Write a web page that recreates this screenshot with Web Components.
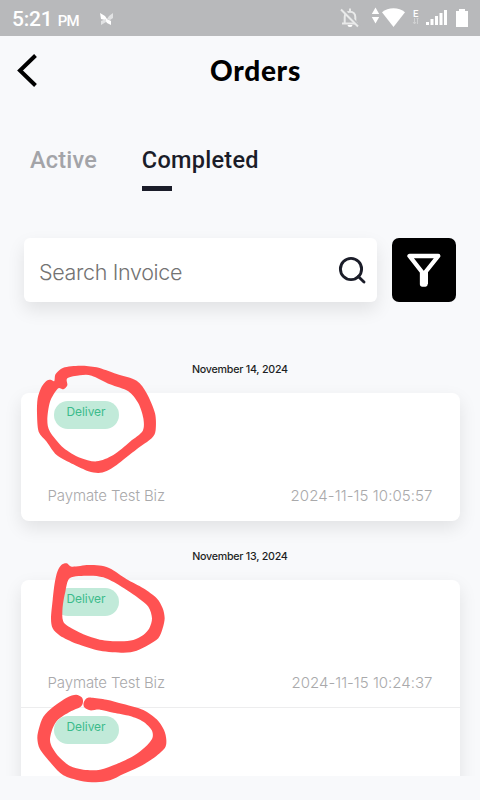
<!DOCTYPE html>
<html lang="en">
<head>
<meta charset="utf-8">
<title>Orders</title>
<style>
body{margin:0;background:#f8f9fb;font-family:Inter,"Liberation Sans",sans-serif}
</style>
</head>
<body>
<orders-screen></orders-screen>
<script>
const make = (name, html, init) => customElements.define(name, class extends HTMLElement {
  connectedCallback() {
    if (!this.shadowRoot) {
      this.attachShadow({mode: 'open'}).innerHTML = html;
      if (init) init.call(this, this.shadowRoot);
    }
  }
});

/* A text run tracked so that its line has the width given in pixels. */
make('fit-text', `<style>:host{display:block;white-space:nowrap}span{display:inline-block}</style><span></span>`, function (root) {
  const s = root.querySelector('span'), t = this.getAttribute('text');
  s.textContent = t;
  const gap = (Number(this.getAttribute('width')) - s.getBoundingClientRect().width) / t.length;
  s.style.letterSpacing = gap.toFixed(3) + 'px';
  s.style.marginRight = (-gap).toFixed(3) + 'px';
});

make('status-bar', `<style>
:host{display:flex;height:36px;background:#b8b9bb;color:#fff;font-family:Roboto,sans-serif;box-sizing:border-box;padding-left:12px}
.time{font-size:21px;line-height:38px;font-weight:500}.pm{font-size:15px;line-height:42px;margin-left:5px;font-weight:500}
.note{margin:12px 0 0 20px;width:14px;height:14px}.right{margin-left:auto;width:144px;height:36px}
</style><fit-text class="time" text="5:21" width="40.5"></fit-text><fit-text class="pm" text="PM" width="21"></fit-text>
<svg class="note" viewBox="0 0 14 14"><path d="M0 1l5 3 2 3 4 2v4l-4-2-2-3-4-1z" fill="#fff"/><path d="M13 1L9 4 7 7l3 1 3-2zM1 13l5-3V7L1 9z" fill="#e1e2e3"/></svg>
<svg class="right" viewBox="336 0 144 36">
<g fill="none" stroke="#e9eaea" stroke-width="2"><path d="M342 23.5h16M344.700 23v-6c0-3 2-5.300 5.300-5.300s5.300 2.300 5.300 5.300v6M350 12V8.500"/><path d="M342.500 8.500l17 17.500" stroke="#b8b9bb" stroke-width="2"/><path d="M341 9.500l17 17" stroke-width="1.900"/></g><path d="M347.500 25h5a2.500 2 0 0 1-5 0z" fill="#fff"/>
<path d="M375.500 7.500l3.700 6.500h-7.400zM375.500 23.500l3.700-6.500h-7.400z" fill="#fff"/>
<path d="M382 12.300C388 6.800 399 6.800 405 12.300L393.500 27z" fill="#fff"/>
<text x="413" y="17" font-size="9.500" fill="#fff" font-family="Roboto" font-weight="500">E</text>
<path d="M414.500 18v6m-1.500-2l1.500 2 1.500-2M417.500 24v-6m-1 1l1-1 1 1" stroke="#d0d1d2" fill="none"/>
<path d="M426 22h3v3h-3zM430.500 19h3v6h-3zM435 16h3v9h-3zM439.500 13h3v12h-3zM444 10h3v15h-3z" fill="#fff"/>
<path d="M459 9h6v2h3v16h-12V11h3z" fill="#fff"/></svg>`);

make('page-header', `<style>
:host{display:grid;grid-template-columns:210px auto 1fr;height:94px;color:#000;font-family:Lato,sans-serif}
svg{width:28px;height:36px;margin:17px 0 0 13px}
fit-text{font-size:28px;font-weight:900;line-height:34px;margin-top:17px}
</style><svg viewBox="0 0 28 36"><path d="M22.500 2.500L7 17.500 22.500 32.500" fill="none" stroke="#000" stroke-width="4"/></svg><fit-text text="Orders" width="91"></fit-text>`);

make('order-tabs', `<style>
:host{display:flex;gap:45px;height:108px;padding-left:30px;font:500 23.500px/30px Roboto,sans-serif;color:#a3a4a8;box-sizing:border-box;padding-top:15px}
.on{color:#1b1d29}i{display:block;width:30px;height:4.500px;background:#1b1d29;margin-top:11px}
</style><fit-text text="Active" width="67"></fit-text><div class="on"><fit-text text="Completed" width="117"></fit-text><i></i></div>`);

make('search-row', `<style>
:host{display:flex;gap:15px;height:64px;padding:0 24px}
.box{width:353px;box-sizing:border-box;display:flex;align-items:center;justify-content:space-between;border-radius:6px;background:#fff;box-shadow:0 8px 18px rgba(0,0,0,.095);padding:0 9px 0 15px;color:#737373;font:300 21.500px/30px Inter,sans-serif}
fit-text{margin-top:4px}.box svg{width:32px;height:32px}.filter{width:64px;height:64px;border-radius:7px;background:#000}
</style><div class="box"><fit-text text="Search Invoice" width="143"></fit-text><svg viewBox="0 0 32 32"><g fill="none" stroke="#1b1d29" stroke-width="2.900"><circle cx="15" cy="15" r="10.600"/><path d="M22.300 22.500l5.700 5.500" stroke-linecap="round"/></g></svg></div>
<svg class="filter" viewBox="0 0 64 64"><path d="M17.500 18h28.800L33.500 34v12.500h-3.500V34z" fill="none" stroke="#fff" stroke-width="4.300" stroke-linejoin="round"/><path d="M28 34h8v12H28z" fill="#fff"/></svg>`);

make('order-item', `<style>
:host{display:flex;flex-direction:column;justify-content:space-between;height:128px;box-sizing:border-box;padding:7.500px 27px 14px;color:#a9a9ab}
:host([divided]){border-top:1px solid #ededee}
.pill{margin-left:6px;width:65px;height:28px;border-radius:14px;background:#c1ead9;color:#3cbb8b;display:flex;justify-content:center;font:400 12px/22px Inter,sans-serif}
.row{display:flex;justify-content:space-between;font:300 15px/22px Inter,sans-serif}
</style><div class="pill"><fit-text text="Deliver" width="39"></fit-text></div><div class="row"><slot name="who"></slot><slot name="when"></slot></div>`);

make('order-card', `<style>
:host{display:block;margin:0 20.500px;width:439px;border-radius:8px;background:#fff;box-shadow:0 7px 18px rgba(0,0,0,.095)}
</style><slot></slot>`);

/* A freehand closed outline, smoothed through its points; the second loop is a hole. */
make('pen-ring', `<style>:host{position:absolute;left:20px;pointer-events:none}svg{display:block;overflow:visible}</style>
<svg width="150" height="130" viewBox="0 0 450 390"><path fill="#ff5252" fill-rule="evenodd"/></svg>`, function (root) {
  const loop = str => {
    const p = str.trim().split(/\s+/).map(v => v.split(',').map(Number)), n = p.length;
    let d = 'M' + p[0];
    for (let i = 0; i < n; i++) {
      const a = p[(i + n - 1) % n], b = p[i], c = p[(i + 1) % n], e = p[(i + 2) % n];
      d += `C${b[0] + (c[0] - a[0]) / 7},${b[1] + (c[1] - a[1]) / 7} ${c[0] - (e[0] - b[0]) / 7},${c[1] - (e[1] - b[1]) / 7} ${c}`;
    }
    return d + 'Z';
  };
  root.querySelector('path').setAttribute('d', this.getAttribute('points').split('|').map(loop).join(''));
});

make('orders-screen', `<style>
:host{display:block;position:relative;width:480px;height:800px;overflow:hidden;background:#f8f9fb}
.list{height:474px;overflow:hidden}
.date{display:flex;justify-content:center;font:500 10.700px/18px Inter,sans-serif;color:#1d1f24}
.d1{padding:59px 0 14px}.d2{padding:27px 0 14px}
</style>
<status-bar></status-bar><page-header></page-header><order-tabs></order-tabs><search-row></search-row>
<div class="list">
<div class="date d1"><fit-text text="November 14, 2024" width="96"></fit-text></div>
<order-card><order-item><fit-text slot="who" text="Paymate Test Biz" width="117.5"></fit-text><fit-text slot="when" text="2024-11-15 10:05:57" width="142"></fit-text></order-item></order-card>
<div class="date d2"><fit-text text="November 13, 2024" width="95.5"></fit-text></div>
<order-card><order-item style="height:127px;padding-bottom:13px"><fit-text slot="who" text="Paymate Test Biz" width="117.5"></fit-text><fit-text slot="when" text="2024-11-15 10:24:37" width="141"></fit-text></order-item><order-item divided></order-item></order-card>
</div>
<pen-ring style="top:350px" points="180,47 230,52 290,72 350,92 380,130 405,190 407,240 395,265 350,298 290,345 260,363 235,369 205,364 160,343 110,315 80,275 56,245 51,190 53,145 65,110 80,92 92,89 103,93 107,72 130,53|142,85 180,76 215,77 270,103 325,124 355,160 370,205 368,243 330,275 280,315 230,334 180,323 130,293 90,245 82,210 90,155 113,116 130,118 142,106"></pen-ring>
<pen-ring style="top:540px" points="140,70 156,80 205,75 245,77 275,88 320,118 370,145 410,175 428,205 434,235 428,265 415,295 385,315 350,332 310,338 240,332 170,311 120,287 98,265 93,235 98,180 104,130 112,95 124,75|150,114 205,107 250,112 300,137 350,170 385,200 396,235 388,265 370,285 340,300 300,304 240,299 190,283 140,256 128,238 128,200 136,155"></pen-ring>
<pen-ring style="top:660px" points="168,104 185,112 189,125 182,140 150,155 115,178 98,205 90,240 98,265 118,292 150,318 190,329 240,329 290,312 340,288 375,262 397,235 395,210 370,185 330,168 280,158 240,149 210,151 193,142 191,128 200,115 215,113 260,119 310,132 370,150 410,178 432,210 439,240 434,265 400,295 355,322 310,342 270,361 228,367 180,362 130,346 95,312 60,268 52,235 57,205 70,170 100,140 140,113"></pen-ring>`);
</script>
</body>
</html>
